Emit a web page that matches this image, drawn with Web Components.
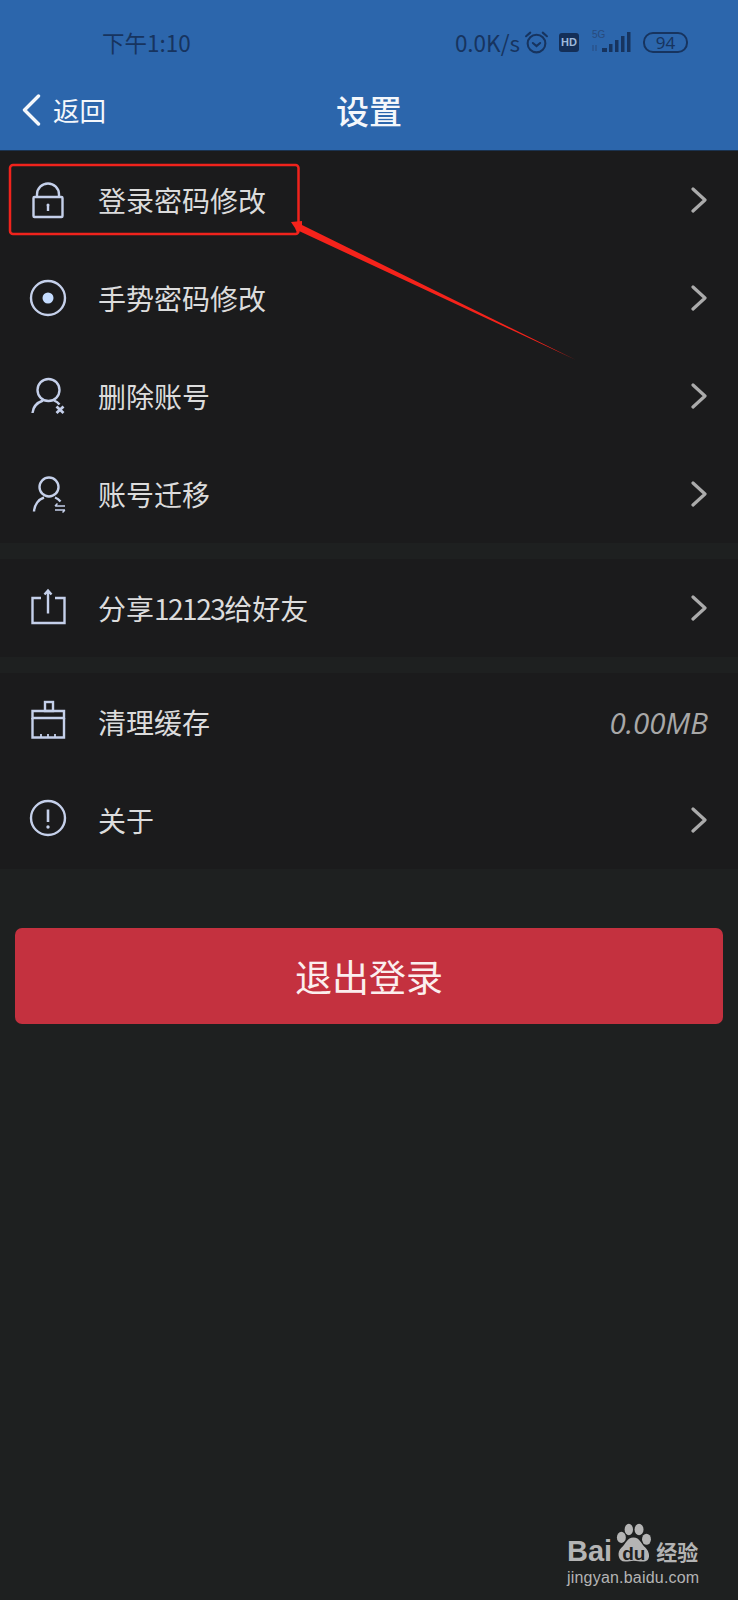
<!DOCTYPE html>
<html lang="zh-CN">
    <head>
        <meta charset="UTF-8" />
        <meta name="viewport" content="width=device-width, initial-scale=1.0" />
        <title>设置</title>
        <style>
            html, body { margin: 0; padding: 0; background: #1e2020; }
            body { font-family: "Noto Sans CJK SC", "Noto Sans", sans-serif; }
        </style>
    </head>
    <body>
        <settings-page>
            <status-bar slot="top"></status-bar>
            <nav-bar slot="top" back="返回" title-text="设置"></nav-bar>

            <settings-group>
                <settings-row label="登录密码修改" icon="lock"></settings-row>
                <settings-row label="手势密码修改" icon="gesture"></settings-row>
                <settings-row label="删除账号" icon="user-x"></settings-row>
                <settings-row label="账号迁移" icon="user-move"></settings-row>
            </settings-group>
            <settings-group>
                <settings-row label="分享12123给好友" icon="share"></settings-row>
            </settings-group>
            <settings-group>
                <settings-row label="清理缓存" icon="brush" value="0.00MB"></settings-row>
                <settings-row label="关于" icon="info"></settings-row>
            </settings-group>

            <logout-button>退出登录</logout-button>
            <red-annotation slot="over"></red-annotation>
            <baidu-mark slot="over"></baidu-mark>
        </settings-page>

        <script>
            // Page shell: blue top, list, button, overlays
            class SettingsPage extends HTMLElement {
                constructor() {
                    super();
                    this.attachShadow({ mode: 'open' });
                    this.shadowRoot.innerHTML = `
                    <style>
                        :host {
                            display: block;
                            position: relative;
                            width: 738px;
                            height: 1600px;
                            overflow: hidden;
                            background: #1e2020;
                        }
                        .top { background: #2c66ac; border-bottom: 1px solid #1b3350; }
                    </style>
                    <div class="top"><slot name="top"></slot></div>
                    <slot></slot>
                    <slot name="over"></slot>
                `;
                }
            }

            class StatusBar extends HTMLElement {
                constructor() {
                    super();
                    this.attachShadow({ mode: 'open' });
                    this.shadowRoot.innerHTML = `
                    <style>
                        :host {
                            display: flex;
                            align-items: center;
                            height: 84px;
                            padding: 0 50px 4px 102px;
                            color: #17345f;
                            font-size: 22.500px;
                        }
                        .time { flex: 1; }
                        .right { display: flex; align-items: center; }
                        .speed { margin-right: 4px; }
                        svg { display: block; }
                        .hd {
                            width: 20px;
                            height: 19px;
                            margin-left: 10px;
                            border-radius: 3px;
                            background: #142f58;
                            color: #9db9dc;
                            font: bold 11px/19px "Liberation Sans", sans-serif;
                            text-align: center;
                        }
                        .net { display: flex; align-items: flex-end; margin-left: 13px; height: 22px; position: relative; }
                        .net span {
                            position: absolute;
                            left: 0;
                            top: -1px;
                            font: 10px/10px "Liberation Sans", sans-serif;
                            color: #284b7e;
                        }
                        .batt {
                            width: 41px;
                            height: 17px;
                            margin-left: 11px;
                            border: 2px solid #17345f;
                            border-radius: 10px;
                            font: 17px/17px "Noto Sans", sans-serif;
                            text-align: center;
                        }
                    </style>
                    <span class="time">下午1:10</span>
                    <div class="right">
                        <span class="speed">0.0K/s</span>
                        <svg width="25" height="25" viewBox="0 0 24 24" fill="none" stroke="#17345f" stroke-width="2" stroke-linecap="round">
                            <circle cx="12" cy="13" r="8.5"/>
                            <path d="M8.5 12.5l3.5 3 3.5-3M2 6l4-3.5M22 6l-4-3.5"/>
                        </svg>
                        <div class="hd">HD</div>
                        <div class="net">
                            <span>5G</span>
                            <svg width="40" height="22" viewBox="0 0 40 22" fill="#17345f">
                                <path d="M1 14v6M4 20v-6" stroke="#284b7e" stroke-width="1" fill="none"/>
                                <rect x="10" y="17" width="5" height="4"/>
                                <rect x="17" y="13" width="3.5" height="8"/>
                                <rect x="23" y="9" width="3.5" height="12"/>
                                <rect x="29" y="5" width="3.5" height="16"/>
                                <rect x="35" y="1" width="3.5" height="20"/>
                            </svg>
                        </div>
                        <div class="batt">94</div>
                    </div>
                `;
                }
            }

            class NavBar extends HTMLElement {
                constructor() {
                    super();
                    this.attachShadow({ mode: 'open' });
                    this.shadowRoot.innerHTML = `
                    <style>
                        :host {
                            display: grid;
                            grid-template-columns: 1fr auto 1fr;
                            align-items: center;
                            height: 44px;
                            padding: 0 0 18px 22px;
                            color: #f4f7fb;
                        }
                        .back { display: flex; align-items: center; gap: 12px; font-size: 26.500px; line-height: 36px; }
                        .title { font-size: 33px; line-height: 40px; font-weight: 500; margin-left: -22px; }
                        svg { display: block; }
                    </style>
                    <div class="back">
                        <svg width="19" height="32" viewBox="0 0 19 32" fill="none" stroke="#f4f7fb" stroke-width="3.4" stroke-linecap="round" stroke-linejoin="round">
                            <path d="M16.5 2L2.5 16l14 14"/>
                        </svg>
                        <span id="back"></span>
                    </div>
                    <div class="title" id="title"></div>
                    <div></div>
                `;
                    this.shadowRoot.getElementById('back').textContent = this.getAttribute('back');
                    this.shadowRoot.getElementById('title').textContent = this.getAttribute('title-text');
                }
            }

            class SettingsGroup extends HTMLElement {
                constructor() {
                    super();
                    this.attachShadow({ mode: 'open' });
                    this.shadowRoot.innerHTML = `
                    <style>
                        :host { display: block; background: #1b1b1c; margin-bottom: 16px; }
                    </style>
                    <slot></slot>
                `;
                }
            }

            // Icon strokes, all on a 36 box
            const ICONS = {
                lock: `<path d="M7 15V12.5a11 11 0 0 1 22 0V15"/><rect x="3.5" y="15" width="29" height="20" rx="1"/>
                       <path d="M18 23.5V29" stroke-width="2.4"/><circle cx="18" cy="23" r="1.5" fill="#c5d0ea" stroke="none"/>`,
                gesture: `<circle cx="18" cy="18" r="17"/><circle cx="18" cy="18" r="5.5" fill="#c5dcff" stroke="none"/>`,
                'user-x': `<circle cx="18.5" cy="12" r="11"/><path d="M2.5 35C3 29 7.5 24.500 13 22.500M24 22.500C26 23.300 28 24.600 29.500 26.500"/>
                           <path d="M26.500 28.500l7 6.500M33.500 28.500l-7 6.500" stroke-width="2.800"/>`,
                'user-move': `<circle cx="19" cy="11" r="9.500"/><path d="M4 35.500C4.500 29 8.500 23.500 14 21.500M25 21.500C27 22.300 29 23.700 30.500 25.500"/>
                              <path d="M25 30h10M27.500 27.500L25 30M25 34h10M32.500 36.500L35 34" stroke-width="1.500"/>`,
                share: `<path d="M11 8H2.500v25H34.500V8H25"/><path d="M18 0.500v23M14.500 4.500L18 0.500l3.500 4"/>`,
                brush: `<rect x="15" y="-2" width="8" height="9"/><path d="M2.500 7H34v7H2.500z"/><path d="M2.500 14v19.500H34V14"/>
                        <path d="M11 30v3.500M18 30v3.500M25 30v3.500" stroke-width="1.800"/>`,
                info: `<circle cx="18" cy="16" r="17"/><path d="M18 7.500V20" stroke-width="2.600"/>
                       <circle cx="18" cy="25" r="1.700" fill="#c5d0ea" stroke="none"/>`
            };

            class SettingsRow extends HTMLElement {
                constructor() {
                    super();
                    this.attachShadow({ mode: 'open' });
                    const value = this.getAttribute('value');
                    const end = value
                        ? `<span class="value">${value}</span>`
                        : `<svg class="chev" width="16" height="26" viewBox="0 0 16 26" fill="none" stroke="#ababab" stroke-width="3.2" stroke-linecap="round" stroke-linejoin="round"><path d="M2 2l12 11L2 24"/></svg>`;
                    // digits sit tighter than the font's default in the label
                    const label = this.getAttribute('label').replace(/\d+/g, '<span class="num">$&</span>');
                    this.shadowRoot.innerHTML = `
                    <style>
                        :host {
                            display: flex;
                            align-items: center;
                            height: 98px;
                            padding: 0 31px 0 30px;
                            box-sizing: border-box;
                            color: #dcdcdc;
                            font-size: 28px;
                        }
                        .icon { flex: none; width: 36px; height: 36px; overflow: visible; }
                        .label { flex: 1; margin-left: 32px; }
                        .num { letter-spacing: -1.500px; }
                        .value {
                            margin-right: -1px;
                            font: italic 29.500px "Open Sans", sans-serif;
                            color: #a8a8a8;
                        }
                        .chev { display: block; flex: none; }
                    </style>
                    <svg class="icon" viewBox="0 0 36 36" fill="none" stroke="#c5d0ea" stroke-width="2.400">${ICONS[this.getAttribute('icon')]}</svg>
                    <span class="label">${label}</span>
                    ${end}
                `;
                }
            }

            class LogoutButton extends HTMLElement {
                constructor() {
                    super();
                    this.attachShadow({ mode: 'open' });
                    this.shadowRoot.innerHTML = `
                    <style>
                        :host {
                            display: flex;
                            align-items: center;
                            justify-content: center;
                            height: 96px;
                            margin: 59px 15px 0;
                            border-radius: 7px;
                            background: #c4313f;
                            color: #fbeeee;
                            font-size: 37px;
                        }
                    </style>
                    <slot></slot>
                `;
                }
            }

            // Red box and arrow drawn over the screenshot
            class RedAnnotation extends HTMLElement {
                constructor() {
                    super();
                    this.attachShadow({ mode: 'open' });
                    this.shadowRoot.innerHTML = `
                    <style>
                        :host { position: absolute; left: 0; top: 0; display: block; width: 738px; height: 400px; pointer-events: none; }
                        svg { display: block; }
                    </style>
                    <svg width="738" height="400" viewBox="0 0 738 400">
                        <rect x="10" y="165" width="288.500" height="69" rx="3" fill="none" stroke="#f0231c" stroke-width="2.500"/>
                        <path d="M291 222L302 221L302 225L576 360L299 231L297 233L295 228Z" fill="#f5231b"/>
                    </svg>
                `;
                }
            }

            class BaiduMark extends HTMLElement {
                constructor() {
                    super();
                    this.attachShadow({ mode: 'open' });
                    this.shadowRoot.innerHTML = `
                    <style>
                        :host {
                            position: absolute;
                            left: 567px;
                            top: 1522px;
                            display: flex;
                            flex-direction: column;
                            color: #b4b4b4;
                        }
                        .logo { display: flex; align-items: flex-end; height: 42px; }
                        .bai { font: bold 29px/26px "Liberation Sans", sans-serif; }
                        .paw { position: relative; width: 40px; height: 42px; margin-left: 1px; }
                        .paw svg { display: block; }
                        .du {
                            position: absolute;
                            left: 9px;
                            top: 22px;
                            font: bold 19px/20px "Liberation Sans", sans-serif;
                            color: #1e2020;
                        }
                        .jy { font: bold 21px/26px "Noto Sans CJK SC", sans-serif; margin-left: 3px; }
                        .url { font: 16px/20px "Liberation Sans", sans-serif; margin-top: 4px; letter-spacing: 0.200px; }
                    </style>
                    <div class="logo">
                        <span class="bai">Bai</span>
                        <div class="paw">
                            <svg width="40" height="42" viewBox="0 0 43 42" fill="#b4b4b4">
                                <ellipse cx="9" cy="15" rx="4.800" ry="6"/>
                                <ellipse cx="17" cy="6.500" rx="4.500" ry="6.200"/>
                                <ellipse cx="28" cy="6.500" rx="4.800" ry="6.200"/>
                                <ellipse cx="36" cy="17" rx="4.800" ry="6"/>
                                <path d="M22 15C15 15 14 22 9 26C4 30 5 41 13 41C17 41 19 40 22 40C26 40 28 41 32 41C41 41 40 31 35 26C30 22 29 15 22 15Z"/>
                            </svg>
                            <span class="du">du</span>
                        </div>
                        <span class="jy">经验</span>
                    </div>
                    <div class="url">jingyan.baidu.com</div>
                `;
                }
            }

            customElements.define('settings-page', SettingsPage);
            customElements.define('status-bar', StatusBar);
            customElements.define('nav-bar', NavBar);
            customElements.define('settings-group', SettingsGroup);
            customElements.define('settings-row', SettingsRow);
            customElements.define('logout-button', LogoutButton);
            customElements.define('red-annotation', RedAnnotation);
            customElements.define('baidu-mark', BaiduMark);
        </script>
    </body>
</html>
